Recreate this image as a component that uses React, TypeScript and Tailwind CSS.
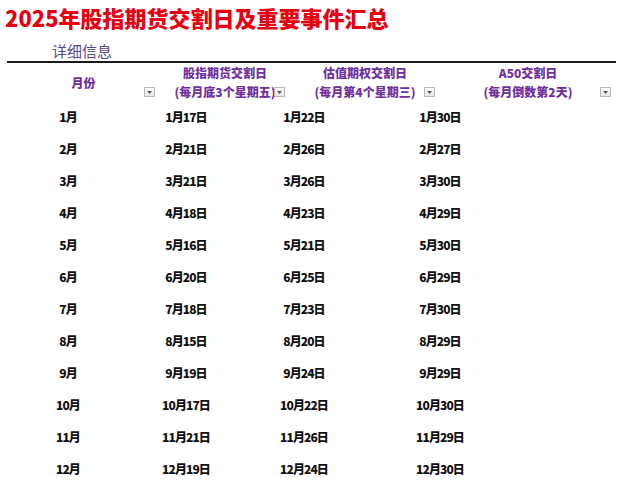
const rows = [
  ["1月", "1月17日", "1月22日", "1月30日"],
  ["2月", "2月21日", "2月26日", "2月27日"],
  ["3月", "3月21日", "3月26日", "3月30日"],
  ["4月", "4月18日", "4月23日", "4月29日"],
  ["5月", "5月16日", "5月21日", "5月30日"],
  ["6月", "6月20日", "6月25日", "6月29日"],
  ["7月", "7月18日", "7月23日", "7月30日"],
  ["8月", "8月15日", "8月20日", "8月29日"],
  ["9月", "9月19日", "9月24日", "9月29日"],
  ["10月", "10月17日", "10月22日", "10月30日"],
  ["11月", "11月21日", "11月26日", "11月29日"],
  ["12月", "12月19日", "12月24日", "12月30日"],
];

function FilterButton() {
  return (
    <span className="absolute right-[5px] bottom-[4px] flex h-[10px] w-[11px] items-center justify-center border border-[#b8b8b8] bg-gradient-to-b from-white to-[#e6e6e6]">
      <svg width="5" height="3" viewBox="0 0 5 3">
        <path d="M0 0 L5 0 L2.5 3 Z" fill="#555" />
      </svg>
    </span>
  );
}

export default function App() {
  return (
    <div
      className="h-[500px] w-[626px] overflow-hidden bg-white"
      style={{ fontFamily: '"Noto Sans CJK SC", "Noto Sans", sans-serif' }}
    >
      <h1 className="pl-[5px] pt-[2px] text-[22px] font-black leading-[30px] text-[#e60012]">
        2025年股指期货交割日及重要事件汇总
      </h1>

      <p className="mt-[9px] pl-[52px] text-[15px] leading-[20px] text-[#5a4b8c]">
        详细信息
      </p>

      <div className="ml-[7px] w-[609px] border-t-2 border-[#1a1a1a]">
        <div className="grid h-[38px] grid-cols-[153px_130px_150px_176px] text-[12px] font-extrabold leading-[19px] text-[#7030a0]">
          <div className="relative flex items-center justify-center">
            月份
            <FilterButton />
          </div>
          <div className="relative flex flex-col items-center justify-center">
            <span>股指期货交割日</span>
            <span>(每月底3个星期五)</span>
            <FilterButton />
          </div>
          <div className="relative flex flex-col items-center justify-center">
            <span>估值期权交割日</span>
            <span>(每月第4个星期三)</span>
            <FilterButton />
          </div>
          <div className="relative flex flex-col items-center justify-center">
            <span>A50交割日</span>
            <span>(每月倒数第2天)</span>
            <FilterButton />
          </div>
        </div>

        {rows.map((r) => (
          <div
            key={r[0]}
            className="grid h-[32px] grid-cols-[122px_114px_122px_150px] items-center text-[12px] font-extrabold tracking-[-0.9px] text-[#111]"
          >
            {r.map((c) => (
              <div key={c} className="text-center">
                {c}
              </div>
            ))}
          </div>
        ))}
      </div>
    </div>
  );
}
